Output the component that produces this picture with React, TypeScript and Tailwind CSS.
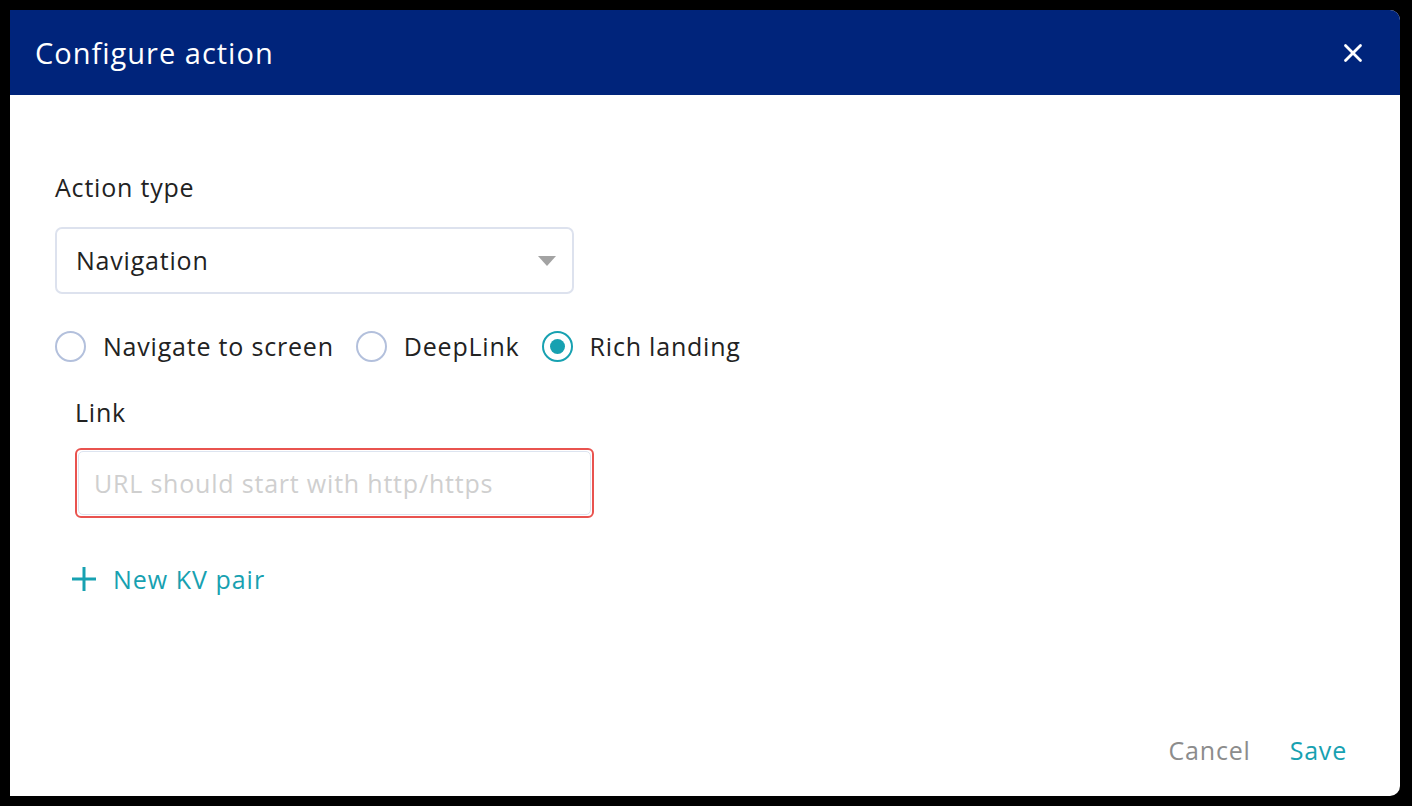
import React, { useState } from 'react';
import { X } from 'lucide-react';

const font = { fontFamily: '"Open Sans", Lato, sans-serif' };

const Radio: React.FC<{ label: string; checked: boolean; onClick: () => void }> = ({ label, checked, onClick }) => (
  <button onClick={onClick} className="flex items-center gap-[17px] text-[25px] tracking-[0.8px] text-[#222]">
    <span
      className={`w-[31px] h-[31px] rounded-full border-2 flex items-center justify-center ${checked ? 'border-[#17a1b1]' : 'border-[#b3c0dc]'}`}
    >
      {checked && <span className="w-[15px] h-[15px] rounded-full bg-[#17a1b1]" />}
    </span>
    {label}
  </button>
);

export default function App() {
  const [mode, setMode] = useState('rich');

  return (
    <div className="w-[1412px] h-[806px] bg-black p-[10px] pr-[12px]" style={font}>
      <div className="w-full h-[786px] bg-white rounded-r-[10px] overflow-hidden flex flex-col">
        {/* Header */}
        <div className="h-[85px] bg-[#00247b] flex items-center justify-between pl-[25px] pr-[32px]">
          <h1 className="text-white text-[29px] tracking-[1px] leading-none">Configure action</h1>
          <X className="w-[30px] h-[30px] text-white" strokeWidth={2.2} />
        </div>

        {/* Body */}
        <div className="flex-1 pl-[45px] pt-[76px] text-[25px] tracking-[0.8px]">
          <div className="text-[#222] leading-[32px]">Action type</div>
          <div className="mt-[24px] w-[519px] h-[67px] border-2 border-[#dde2ee] rounded-[7px] flex items-center justify-between pl-[19px] pr-[16px]">
            <span className="text-[#222]">Navigation</span>
            <svg width="18" height="10" viewBox="0 0 18 10">
              <path d="M0 0 L18 0 L9 10 Z" fill="#a3a3a3" />
            </svg>
          </div>

          <div className="mt-[34px] flex items-center gap-[22px]">
            <Radio label="Navigate to screen" checked={mode === 'nav'} onClick={() => setMode('nav')} />
            <Radio label="DeepLink" checked={mode === 'deep'} onClick={() => setMode('deep')} />
            <Radio label="Rich landing" checked={mode === 'rich'} onClick={() => setMode('rich')} />
          </div>

          <div className="pl-[20px]">
            <div className="mt-[30px] text-[#222] leading-[32px]">Link</div>
            <div className="mt-[20px] w-[519px] h-[70px] border-2 border-[#e9534f] rounded-[6px] p-[1px]">
              <input
                placeholder="URL should start with http/https"
                className="w-full h-full border border-[#dde4f0] rounded-[5px] px-[15px] text-[25px] tracking-[0.8px] text-[#222] placeholder:text-[#cfcfcf] outline-none"
              />
            </div>
          </div>

          <button className="mt-[43px] ml-[17px] flex items-center gap-[17px] tracking-[1px] text-[#17a1b1]">
            <svg width="24" height="24" viewBox="0 0 24 24">
              <path d="M12 0 V24 M0 12 H24" stroke="#17a1b1" strokeWidth="3" />
            </svg>
            New KV pair
          </button>
        </div>

        {/* Footer */}
        <div className="flex justify-end items-center gap-[39px] pr-[53px] pb-[27px] text-[25px] tracking-[0.8px]">
          <button className="text-[#8c8c8c]">Cancel</button>
          <button className="text-[#17a1b1]">Save</button>
        </div>
      </div>
    </div>
  );
}
